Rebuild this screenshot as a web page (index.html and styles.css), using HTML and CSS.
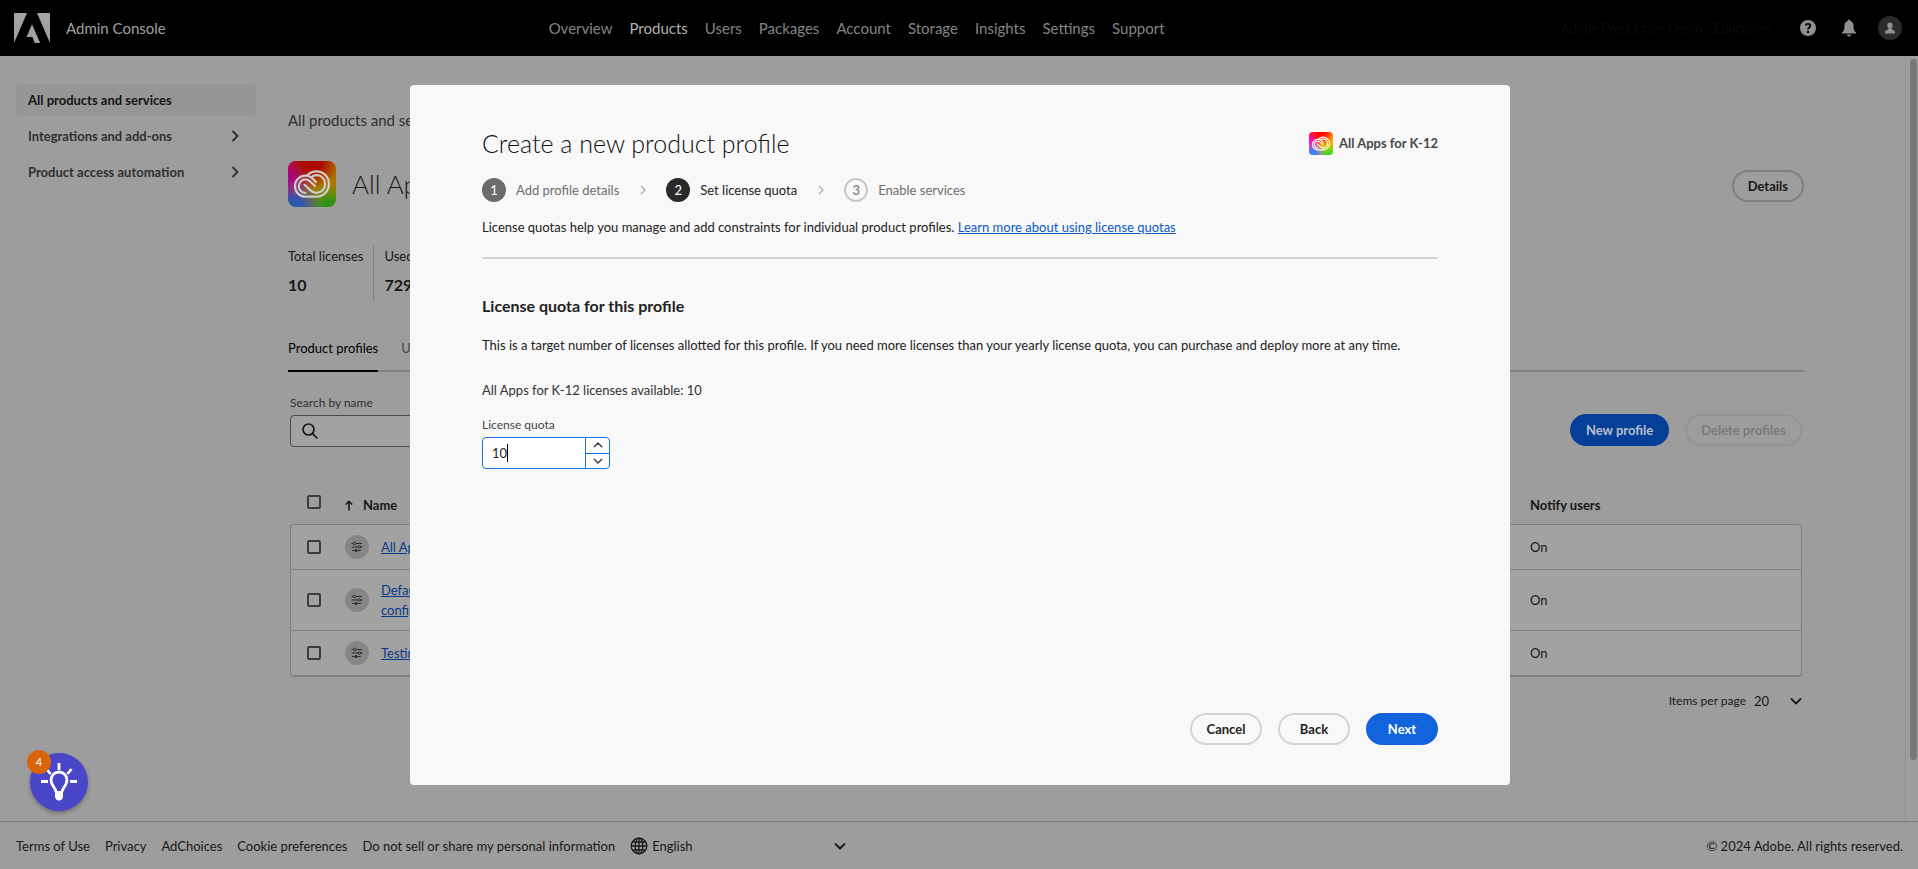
FILE: index.html
```html
<!DOCTYPE html>
<html lang="en">
<head>
<meta charset="utf-8">
<meta name="viewport" content="width=device-width, initial-scale=1">
<title>Admin Console</title>
<link rel="stylesheet" href="styles.css">
</head>
<body>
<svg class="defs" width="0" height="0" aria-hidden="true">
  <defs>
    <radialGradient id="g-red" cx="50%" cy="0%" r="60%"><stop offset="0" stop-color="#ff0000"/><stop offset=".35" stop-color="#ff1000"/><stop offset="1" stop-color="#ff1000" stop-opacity="0"/></radialGradient>
    <radialGradient id="g-pink" cx="0%" cy="25%" r="62%"><stop offset="0" stop-color="#ff00c8"/><stop offset=".3" stop-color="#f010d8"/><stop offset="1" stop-color="#e020e0" stop-opacity="0"/></radialGradient>
    <radialGradient id="g-blue" cx="8%" cy="100%" r="62%"><stop offset="0" stop-color="#2d8cff"/><stop offset=".4" stop-color="#4a80ff"/><stop offset="1" stop-color="#6a70ff" stop-opacity="0"/></radialGradient>
    <radialGradient id="g-green" cx="85%" cy="105%" r="60%"><stop offset="0" stop-color="#2fd52f"/><stop offset=".35" stop-color="#50d820"/><stop offset="1" stop-color="#a0e000" stop-opacity="0"/></radialGradient>
    <symbol id="cc-bg" viewBox="0 0 48 46">
      <rect width="48" height="46" rx="8" fill="#ffae00"/>
      <rect width="48" height="46" rx="8" fill="url(#g-green)"/>
      <rect width="48" height="46" rx="8" fill="url(#g-blue)"/>
      <rect width="48" height="46" rx="8" fill="url(#g-pink)"/>
      <rect width="48" height="46" rx="8" fill="url(#g-red)"/>
    </symbol>
    <symbol id="cc-mark" viewBox="0 0 48 46">
      <g fill="none" stroke="currentColor" stroke-width="2.200" stroke-linecap="round" stroke-linejoin="round">
        <path d="M19 14.700C21.300 11.800 24.800 10.300 28.500 10.300C35.500 10.300 41 16 41 23C41 30 35.500 35.700 28.500 35.700H17.500C11.500 35.700 7 31 7 25.200C7 19.400 11.500 14.700 17.500 14.700C20 14.700 22.500 15.700 24.300 17.400L28 21"/>
        <path d="M17.500 32C13.700 32 10.800 28.900 10.800 25.200C10.800 21.500 13.700 18.400 17.500 18.400C19.200 18.400 20.800 19.200 22 20.400L27 25"/>
        <path d="M23.500 16C25 14.800 26.600 14.200 28.500 14.200C33.300 14.200 37.200 18.100 37.200 23C37.200 27.900 33.300 31.800 28.500 31.800C26.200 31.800 24.200 31 22.500 29.400L16.500 23.800"/>
      </g>
    </symbol>
    <symbol id="chev" viewBox="0 0 12 12"><path d="M4 1.500 8.500 6 4 10.500" fill="none" stroke="currentColor" stroke-width="1.800" stroke-linecap="round" stroke-linejoin="round"/></symbol>
    <symbol id="down" viewBox="0 0 12 12"><path d="M1.500 4 6 8.500 10.500 4" fill="none" stroke="currentColor" stroke-width="1.800" stroke-linecap="round" stroke-linejoin="round"/></symbol>
    <symbol id="sliders" viewBox="0 0 12 12">
      <g fill="none" stroke="currentColor" stroke-width="1">
        <path d="M.5 2.500H2M5 2.500H11M.5 6H7M10 6H11.500M1 9.500H3.500M6.500 9.500H10"/>
        <circle cx="3.500" cy="2.500" r="1.300"/><circle cx="8.500" cy="6" r="1.300"/><circle cx="5" cy="9.500" r="1.100" fill="currentColor"/>
      </g>
    </symbol>
  </defs>
</svg>

<div class="app">
  <header class="topbar">
    <div class="brand">
      <svg width="36" height="30" viewBox="0 0 36 30" aria-label="Adobe"><path fill="#a2a2a2" d="M0 0H13L0 30ZM23 0H36V30ZM18 11.200 26.200 30H20.800L18.400 24H12.600Z"/></svg>
      <span>Admin Console</span>
    </div>
    <nav class="topnav" aria-label="Main">
      <a href="#">Overview</a><a href="#" class="current">Products</a><a href="#">Users</a><a href="#">Packages</a><a href="#">Account</a><a href="#">Storage</a><a href="#">Insights</a><a href="#">Settings</a><a href="#">Support</a>
    </nav>
    <div class="tools">
      <span class="org">Adobe Production Demo - Education</span>
      <button aria-label="Help"><svg width="16" height="16" viewBox="0 0 16 16"><circle cx="8" cy="8" r="8" fill="currentColor"/><path d="M5.700 5.600C6 4.400 6.900 3.900 8.100 3.900C9.400 3.900 10.300 4.600 10.300 5.700C10.300 7.400 8 7.500 8 9.500" fill="none" stroke="#000" stroke-width="1.900"/><circle cx="8" cy="12" r="1.200" fill="#000"/></svg></button>
      <button aria-label="Notifications"><svg width="16" height="18" viewBox="0 0 16 18"><path fill="currentColor" d="M8 .5C8.800.5 9.300 1.100 9.300 2C11.600 2.600 12.500 4.500 12.500 7C12.500 11 13.300 12 15 13.500V14.500H1V13.500C2.700 12 3.500 11 3.500 7C3.500 4.500 4.400 2.600 6.700 2C6.700 1.100 7.200.5 8 .5ZM6 15.500H10C10 16.800 9.200 17.500 8 17.500S6 16.800 6 15.500Z"/></svg></button>
      <button class="avatar" aria-label="Account"><svg width="12" height="12" viewBox="0 0 12 12"><path fill="currentColor" d="M6 .5C7.700.5 8.700 1.700 8.700 3.300C8.700 4.500 8.200 5.500 7.500 6.200V7.300C9.500 7.700 11 8.700 11.300 11.500H.7C1 8.700 2.500 7.700 4.500 7.300V6.200C3.800 5.500 3.300 4.500 3.300 3.300C3.300 1.700 4.300.5 6 .5Z"/></svg></button>
    </div>
  </header>

  <div class="body">
    <nav class="side" aria-label="Products">
      <a href="#" class="current">All products and services</a>
      <a href="#">Integrations and add-ons<svg width="12" height="12"><use href="#chev"/></svg></a>
      <a href="#">Product access automation<svg width="12" height="12"><use href="#chev"/></svg></a>
    </nav>
    <main class="content">
      <p class="crumb">All products and services</p>
      <div class="product">
        <svg width="48" height="46"><g class="dim"><use href="#cc-bg"/></g><g class="mark"><use href="#cc-mark"/></g></svg>
        <h1>All Apps for K-12</h1>
        <button class="btn">Details</button>
      </div>
      <dl class="stats">
        <div><dt>Total licenses</dt><dd>10</dd></div>
        <div><dt>Used licenses</dt><dd>729</dd></div>
      </dl>
      <div class="tabs"><a href="#" class="current">Product profiles</a><a href="#">Users</a></div>
      <div class="inset">
        <div class="actions">
          <div class="search">
            <label for="q">Search by name</label>
            <div class="searchbox">
              <svg width="18" height="18" viewBox="0 0 18 18"><g fill="none" stroke="currentColor" stroke-width="1.700" stroke-linecap="round"><circle cx="7.500" cy="7.500" r="5.500"/><path d="M11.600 11.600 16 16"/></g></svg>
              <input id="q" type="text">
            </div>
          </div>
          <button class="btn primary">New profile</button>
          <button class="btn" disabled>Delete profiles</button>
        </div>
        <div class="tablebox">
          <table>
            <thead>
              <tr><th class="c-check"><input type="checkbox" aria-label="Select all"></th><th class="c-name"><span class="sort"><svg width="8" height="11" viewBox="0 0 8 11"><path d="M4 10.500V1.500M.8 4.500 4 1.300 7.200 4.500" fill="none" stroke="currentColor" stroke-width="1.600"/></svg>Name</span></th><th class="c-notify">Notify users</th></tr>
            </thead>
            <tbody>
              <tr><td class="c-check"><input type="checkbox" aria-label="All Apps"></td><td><div class="profile"><span class="dot"><svg width="12" height="12"><use href="#sliders"/></svg></span><a href="#">All Apps for K-12</a></div></td><td>On</td></tr>
              <tr><td class="c-check"><input type="checkbox" aria-label="Default"></td><td><div class="profile"><span class="dot"><svg width="12" height="12"><use href="#sliders"/></svg></span><a href="#">Default<br>configuration</a></div></td><td>On</td></tr>
              <tr><td class="c-check"><input type="checkbox" aria-label="Testing"></td><td><div class="profile"><span class="dot"><svg width="12" height="12"><use href="#sliders"/></svg></span><a href="#">Testing</a></div></td><td>On</td></tr>
            </tbody>
          </table>
        </div>
        <div class="pager">
          <label for="pp">Items per page</label>
          <span class="picker"><select id="pp"><option>20</option></select><svg width="12" height="12"><use href="#down"/></svg></span>
        </div>
      </div>
    </main>
    <div class="track"><div class="thumb"></div></div>
  </div>

  <footer class="foot">
    <a href="#">Terms of Use</a><a href="#">Privacy</a><a href="#">AdChoices</a><a href="#">Cookie preferences</a><a href="#">Do not sell or share my personal information</a>
    <span class="lang">
      <svg width="18" height="18" viewBox="0 0 18 18"><g fill="none" stroke="currentColor" stroke-width="1.300"><circle cx="9" cy="9" r="7.800"/><ellipse cx="9" cy="9" rx="3.800" ry="7.800"/><path d="M9 1V17M1 9H17M2.300 5H15.700M2.300 13H15.700"/></g></svg>
      <select aria-label="Language"><option>English</option></select>
      <svg width="12" height="12"><use href="#down"/></svg>
    </span>
    <span class="copy">© 2024 Adobe. All rights reserved.</span>
  </footer>
</div>

<button class="fab" aria-label="Tips">
  <svg width="38" height="38" viewBox="0 0 38 38"><g fill="none" stroke="#fff" stroke-width="2.800"><path d="M19 0V7M31.500 6 27.500 11M6.500 6 10.500 11M1 18.500H8M30 18.500H37"/><path d="M16 29C16 25 11 23 11 17A8 8 0 0 1 27 17C27 23 22 25 22 29"/></g><path fill="#fff" d="M15 28H23V33C23 35.500 21.500 37.500 19 37.500S15 35.500 15 33Z"/></svg>
  <span class="badge">4</span>
</button>

<div class="overlay">
  <section class="dialog" role="dialog" aria-labelledby="dt">
    <div class="dhead"><h2 id="dt">Create a new product profile</h2><span class="chip"><svg width="24" height="23"><use href="#cc-bg"/><use href="#cc-mark" color="#fff"/></svg>All Apps for K-12</span></div>
    <ol class="steps">
      <li class="done"><span>1</span>Add profile details</li>
      <li class="sep" aria-hidden="true"><svg width="10" height="10"><use href="#chev"/></svg></li>
      <li class="now"><span>2</span>Set license quota</li>
      <li class="sep" aria-hidden="true"><svg width="10" height="10"><use href="#chev"/></svg></li>
      <li><span>3</span>Enable services</li>
    </ol>
    <p class="intro">License quotas help you manage and add constraints for individual product profiles. <a href="#">Learn more about using license quotas</a></p>
    <h3>License quota for this profile</h3>
    <p>This is a target number of licenses allotted for this profile. If you need more licenses than your yearly license quota, you can purchase and deploy more at any time.</p>
    <p class="avail">All Apps for K-12 licenses available: 10</p>
    <label class="qlabel" for="quota">License quota</label>
    <div class="stepper">
      <input id="quota" type="text" inputmode="numeric" value="10">
      <span class="caret"></span>
      <div class="arrows">
        <button aria-label="Increase"><svg class="flip" width="10" height="10"><use href="#down"/></svg></button>
        <button aria-label="Decrease"><svg width="10" height="10"><use href="#down"/></svg></button>
      </div>
    </div>
    <div class="dfoot"><button class="btn">Cancel</button><button class="btn">Back</button><button class="btn primary">Next</button></div>
  </section>
</div>
</body>
</html>
```
FILE: styles.css
```css
* { box-sizing: border-box; }
body, h1, h2, h3, p, dl, dd, ol { margin: 0; padding: 0; }
body {
  font: 13px/20px Lato, "Open Sans", sans-serif;
  color: #181818;
  background: #9d9d9d;
}
button, input, select { font: inherit; color: inherit; }
button { padding: 0; border: 0; background: none; cursor: pointer; }
svg { display: block; flex: none; }
.defs { position: absolute; }

.app { display: flex; flex-direction: column; height: 100vh; overflow: hidden; }

/* Top bar */
.topbar {
  display: grid;
  grid-template-columns: 28% auto 1fr;
  align-items: center;
  flex: none;
  height: 56px;
  padding: 0 16px 1px 14px;
  background: #000;
  color: #858585;
  font-size: 15px;
}
.brand { display: flex; align-items: center; gap: 16px; color: #a0a0a0; }
.topnav { display: flex; gap: 17px; padding-left: 6px; }
.topnav a { color: inherit; text-decoration: none; }
.topnav .current { color: #b0b0b0; }
.tools { display: flex; align-items: center; justify-content: flex-end; gap: 25px; }
.tools .org { margin-right: 4px; color: #0b0b0b; font-size: 13px; }
.tools button { color: #909090; }
.tools .avatar {
  display: grid;
  place-items: center;
  width: 24px;
  height: 24px;
  margin-left: -4px;
  border-radius: 50%;
  background: #2b2b2b;
}

/* Page body */
.body { display: flex; flex: 1; min-height: 0; }
.side {
  display: flex;
  flex-direction: column;
  gap: 4px;
  flex: none;
  width: 240px;
  margin: 28px 32px 0 16px;
}
.side a {
  display: flex;
  align-items: center;
  justify-content: space-between;
  height: 32px;
  padding: 0 15px 0 12px;
  border-radius: 4px;
  color: #303030;
  font-weight: 700;
  text-decoration: none;
}
.side .current { background: #969696; color: #141414; }
.content { flex: 1; min-width: 0; padding-top: 54px; margin-right: 101px; }
.crumb { color: #303030; font-size: 15px; }
.product { display: flex; align-items: center; margin-top: 30px; }
.dim { filter: brightness(.68); }
.mark { color: #cdcdcd; }
.product h1 { flex: 1; margin-left: 16px; font-size: 26px; line-height: 48px; font-weight: 300; }
.product .btn { margin-top: 4px; }
.stats { display: flex; margin-top: 38px; }
.stats div { height: 55px; padding-right: 10px; }
.stats div + div { padding-left: 10px; border-left: 1px solid #808080; }
.stats dd { margin-top: 9px; font-size: 16px; font-weight: 700; }
.tabs { display: flex; gap: 23px; margin-top: 37px; border-bottom: 2px solid #838383; }
.tabs a {
  height: 34px;
  margin-bottom: -2px;
  color: #484848;
  text-decoration: none;
}
.tabs .current { border-bottom: 2px solid #000; color: #000; }
.inset { margin: 21px 2px 0; }

.actions { display: flex; align-items: flex-end; gap: 16px; }
.search { display: flex; flex-direction: column; gap: 2px; width: 300px; margin-right: auto; font-size: 12px; }
.search label { color: #303030; }
.searchbox {
  display: flex;
  align-items: center;
  height: 32px;
  padding: 0 10px;
  border: 1px solid #4c4c4c;
  border-radius: 4px;
  background: #a2a2a2;
}
.searchbox input { flex: 1; min-width: 0; margin-left: 8px; border: 0; background: none; outline: 0; }

.btn {
  height: 32px;
  min-width: 72px;
  padding: 0 14px;
  border: 2px solid #808080;
  border-radius: 16px;
  font-size: 13px;
  font-weight: 700;
}
.actions .btn { margin-bottom: 1px; }
.btn.primary { border-color: #063f98; background: #063f98; color: #b8bfca; }
.btn:disabled { border-color: #949494; color: #7a7a7a; }

/* Profile table */
.tablebox { margin-top: 39px; }
table { width: 100%; border-collapse: separate; border-spacing: 0; table-layout: fixed; }
th, td { padding: 0; text-align: left; }
th { height: 38px; font-weight: 700; vertical-align: middle; }
th.c-check { padding-bottom: 6px; }
.c-check { width: 55px; padding-left: 17px; }
td.c-check { padding-left: 16px; }
.c-notify { width: 272px; }
.sort { display: flex; align-items: center; gap: 10px; }
td { height: 45px; border-top: 1px solid #808080; background: #a2a2a2; }
td:first-child { border-left: 1px solid #808080; }
td:last-child { border-right: 1px solid #808080; }
tbody tr:first-child td:first-child { border-top-left-radius: 4px; }
tbody tr:first-child td:last-child { border-top-right-radius: 4px; }
tbody tr:last-child td { border-bottom: 2px solid #808080; }
tbody tr:last-child td:first-child { border-bottom-left-radius: 4px; }
tbody tr:last-child td:last-child { border-bottom-right-radius: 4px; }
input[type="checkbox"] {
  appearance: none;
  display: block;
  width: 14px;
  height: 14px;
  margin: 0;
  border: 2px solid #3c3c3c;
  border-radius: 2px;
}
.profile { display: flex; align-items: center; gap: 12px; padding: 10px 0; }
.profile a { color: #0a3a85; }
.dot {
  display: grid;
  place-items: center;
  flex: none;
  width: 24px;
  height: 24px;
  border-radius: 50%;
  background: #868686;
  color: #2c2c2c;
}

.pager { display: flex; align-items: center; justify-content: flex-end; gap: 8px; margin-top: 14px; font-size: 12px; }
.picker { display: flex; align-items: center; width: 48px; font-size: 13px; }
select { appearance: none; flex: 1; min-width: 0; padding: 0; border: 0; background: none; }

.track { flex: none; width: 13px; padding: 3px 1px 0 4px; border-left: 1px solid #929292; }
.thumb { height: 92%; border-radius: 4px; background: #787878; }

/* Footer */
.foot {
  display: flex;
  align-items: center;
  gap: 15px;
  flex: none;
  height: 48px;
  padding: 1px 15px 0 16px;
  border-top: 1px solid #7c7c7c;
}
.foot a { color: inherit; text-decoration: none; }
.lang { display: flex; align-items: center; gap: 4px; width: 216px; }
.copy { margin-left: auto; }

/* Tips launcher */
.fab {
  position: fixed;
  left: 30px;
  bottom: 58px;
  display: grid;
  place-items: center;
  width: 58px;
  height: 58px;
  border-radius: 50%;
  background: #4946c8;
  box-shadow: 0 2px 4px rgba(0, 0, 0, .3);
}
.badge {
  position: absolute;
  left: -3px;
  top: -3px;
  width: 24px;
  height: 24px;
  border-radius: 50%;
  background: #da640c;
  color: #fff;
  font-size: 11px;
  line-height: 24px;
}

/* Dialog */
.overlay { position: fixed; inset: 0; display: grid; place-items: center; padding: 1px 0 0 2px; }
.dialog {
  display: flex;
  flex-direction: column;
  width: 1100px;
  max-width: 90vw;
  min-height: 700px;
  padding: 39px 72px 40px;
  border-radius: 4px;
  background: #f8f8f8;
  color: #222;
}
.dialog a { color: #0d59c8; }
.dhead { display: flex; align-items: center; justify-content: space-between; }
.dhead h2 { font-size: 25px; line-height: 38px; font-weight: 300; color: #111; }
.chip { display: flex; align-items: center; gap: 6px; color: #484848; font-weight: 700; }
.steps { display: flex; align-items: center; margin-top: 16px; list-style: none; color: #6e6e6e; }
.steps li { display: flex; align-items: center; }
.steps span {
  width: 24px;
  height: 24px;
  margin-right: 10px;
  border: 2px solid #c8c8c8;
  border-radius: 50%;
  line-height: 20px;
  text-align: center;
}
.steps .done span { border-color: #6c6c6c; background: #6c6c6c; color: #fff; }
.steps .now { color: #222; }
.steps .now span { border-color: #2a2a2a; background: #2a2a2a; color: #fff; }
.steps .sep { width: 47px; justify-content: center; color: #b4b4b4; }
.intro { margin-top: 15px; padding-bottom: 20px; border-bottom: 2px solid #d3d3d3; }
.dialog h3 { margin: 35px 0 17px; font-size: 16px; line-height: 24px; }
.avail { margin-top: 25px; color: #333; }
.qlabel { margin-top: 16px; font-size: 12px; line-height: 18px; color: #444; }
.stepper {
  position: relative;
  display: flex;
  width: 128px;
  height: 32px;
  margin-top: 3px;
  border: 1px solid #1473e6;
  border-radius: 4px;
  background: #fff;
}
.stepper input { flex: 1; min-width: 0; padding: 0 9px; border: 0; background: none; outline: 0; }
.caret { position: absolute; left: 24px; top: 6px; width: 1px; height: 18px; background: #000; }
.arrows { display: flex; flex-direction: column; width: 24px; border-left: 1px solid #1473e6; color: #444; }
.arrows button { flex: 1; display: grid; place-items: center; }
.arrows button + button { border-top: 1px solid #1473e6; }
.flip { transform: rotate(180deg); }
.dfoot { display: flex; justify-content: flex-end; gap: 16px; margin-top: auto; }
.dialog .btn { border-color: #d3d3d3; }
.dialog .btn.primary { border-color: #1264dd; background: #1264dd; color: #fff; }
```
